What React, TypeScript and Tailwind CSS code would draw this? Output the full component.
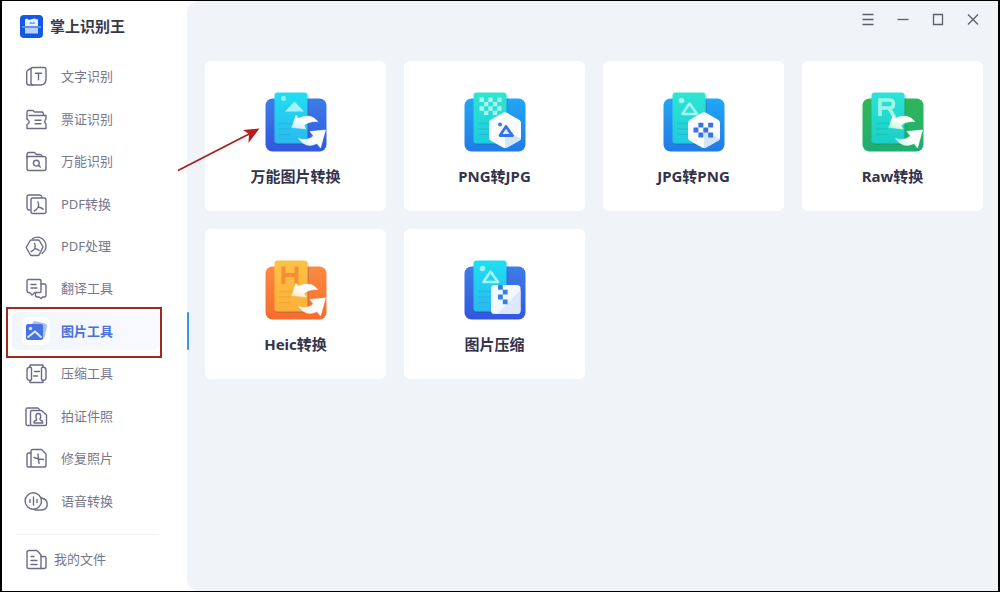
import React, { useState } from "react";
import clsx from "clsx";

const ADOBE = "M14 10q1 2.600.2 5-1.400 2.800-4 4M14.200 15q3 .3 5 2.200";

// Outline icons of the sidebar, one list of strokes per icon
const outlines: Record<string, string[]> = {
    text: [
        "M7 4.500L4 6Q2.700 6.700 2.700 8.200V18.500Q2.700 21 5 21H9",
        "M9 3.500H20Q22 3.500 22 5.500V15Q22 21 16 21H9Q7 21 7 19V5.500Q7 3.500 9 3.500Z",
        "M11.500 9.200h6M14.500 9.200v6.600",
    ],
    ticket: [
        "M3 12V5Q3 3.500 4.500 3.500H9L10.500 5H18Q19.500 5 19.500 8",
        "M5 8.500H22V12Q19.500 14.500 22 17V21.500H3V17.500Q7.500 15 3 12",
        "M11 13.200h6M11 16.800h6",
    ],
    search: [
        "M3 9V5.500Q3 3.500 5 3.500H10.500L12.500 5.500H16Q17.500 5.500 18 7.500",
        "M3 7.500H20Q22 7.500 22 9.500V19.500Q22 21.500 20 21.500H5Q3 21.500 3 19.500Z",
        "M15.200 14.200a2.900 2.900 0 1 1-5.800 0a2.900 2.900 0 0 1 5.800 0M14.500 16.300l1.800 1.700",
    ],
    pdf: [
        "M6 18H5Q3 17.500 3 15.500V5Q3 3 5 3H15.500Q17.500 3 18 5",
        "M9 6H20Q22 6 22 8V19.500Q22 21.500 20 21.500H9Q7 21.500 7 19.500V8Q7 6 9 6Z",
        ADOBE,
    ],
    pdfEdit: [
        "M8.500 4.500A8.700 8.700 0 1 1 18 19.500",
        "M7.500 6H14Q15 6 15.600 7L19 13L15.600 20Q15 21.500 14 21.500H7.500Q6.500 21.500 5.900 20L2.200 13.500L5.900 7Q6.500 6 7.500 6Z",
        "M10.700 9.500q1 2.600 0 5-1.200 2-3.500 3M10.700 14.500q2.500.2 4.500 2",
    ],
    translate: [
        "M4.500 3.500H15.500Q17 3.500 17 5V15.500Q17 16.500 16 16.500H11L8 19L5.500 16.500H4.500Q3 16.500 3 15V5Q3 3.500 4.500 3.500Z",
        "M17 8H20.500Q22 8 22 9.500V19.500Q22 21 20.500 21H18.500L17 22.500L15 21H13Q11.500 21 11.500 19V17",
        "M7 8.500h5M7 12h6",
    ],
    compress: [
        "M6 4H19V6Q17 6.500 17.500 8.500V17Q17 19 19 19.500V21.500H6V19.500Q8 19 7.500 17V8.500Q8 6.500 6 6Z",
        "M6 6Q3 6.500 3 9V17Q3 19 6 19.500M19 6Q22 6.500 22 9V17Q22 19 19 19.500",
        "M10.500 10.500h5M9.500 15h4",
    ],
    idPhoto: [
        "M6 21.500H3.500Q2 21.500 2 20V5.500Q2 4 3.500 4H13.500Q15 4 15.500 6",
        "M8 6.500H17.500L22.500 11V20Q22.500 21.500 21 21.500H8Q6.500 21.500 6.500 20V8Q6.500 6.500 8 6.500Z",
        "M10 19Q10 16.500 12.500 16Q13 15 12 13.500V12Q12 9.500 14.300 9.500T16.600 12V13.500Q15.600 15 16.200 16Q18.700 16.500 18.700 19Z",
    ],
    repair: [
        "M7 7H4.500Q3 7 3 8.500V19.500Q3 21 4.500 21H7",
        "M8.500 3.500H17.500L22 8V19.500Q22 21 20.500 21H8.500Q7 21 7 19.500V5Q7 3.500 8.500 3.500Z",
        "M14 8L14.500 13L19.500 13.500M10 11.500L14.500 13L15 17.500",
    ],
    voice: [
        "M17.500 12a8.200 8.200 0 1 1-16.400 0a8.200 8.200 0 0 1 16.400 0Z",
        "M17.500 9Q23.200 10 23.200 15.500Q23 21 17 21H11",
        "M9.500 8v8M6 10.500v3M13 10.500v3",
    ],
    files: [
        "M5 3.500H13L17 8V21.500H5Q3 21.500 3 19.500V5.500Q3 3.500 5 3.500Z",
        "M17 9.500H20.500Q22 9.500 22 11V19.500Q22 21.500 20 21.500H17",
        "M7 9.500h3M7 13.500h6M7 17.500h6",
    ],
};

function LineIcon({ name }: { name: string }) {
    return (
        <svg width="24" height="24" viewBox="0 0 24 24" fill="none" stroke="currentColor" strokeWidth="1.4" strokeLinejoin="round" strokeLinecap="round" className="shrink-0 text-[#6c6c8a]">
            {outlines[name].map((d) => (
                <path key={d} d={d} />
            ))}
        </svg>
    );
}

function PictureIcon() {
    return (
        <svg width="24" height="24" viewBox="0 0 24 24">
            <rect x="7" y="3" width="15" height="16" rx="3" fill="#a9bff5" transform="rotate(12 14 11)" />
            <rect x="2" y="5" width="17" height="16" rx="2" fill="#4672e4" />
            <circle cx="6.500" cy="9.500" r="1.700" fill="#dfe8ff" />
            <path d="M3.500 18.500L11 12.500L17.500 18.500" fill="none" stroke="#dfe8ff" strokeWidth="2" />
        </svg>
    );
}

function Logo() {
    return (
        <svg width="23" height="23" viewBox="0 0 23 23">
            <rect width="23" height="23" rx="4" fill="#1458e6" />
            <path d="M5 4.500L7 3.500L9 5L14 3.500L18 4.500V11H5Z" fill="#e9f1ff" />
            <path d="M9 9L11 6.500L12.500 8L14 6L15 9Z" fill="#7ba4f5" />
            <path d="M5 13H18V18.500H5Z" fill="#b9d0fc" />
            <path d="M2 12H21" stroke="#8cb4ff" strokeWidth="1.200" />
        </svg>
    );
}

type Palette = { body: [string, string]; sheet: [string, string]; line: string };

const palettes: Record<string, Palette> = {
    blue: { body: ["#3d7de6", "#3257df"], sheet: ["#1fdff2", "#2bb9ee"], line: "#22a6dd" },
    sky: { body: ["#22a7f5", "#207be8"], sheet: ["#2fe6cf", "#1fcbe0"], line: "#1fb4c6" },
    green: { body: ["#30b658", "#1fae72"], sheet: ["#2be3d8", "#1bcfc6"], line: "#1db6a5" },
    orange: { body: ["#fb8a42", "#f66c2c"], sheet: ["#fcc244", "#fbb03a"], line: "#ee9a2c" },
};

// Pair of curved arrows on the corner of the converter icons
function SwapArrows({ id, tint }: { id: string; tint: string }) {
    return (
        <g fill={`url(#${id}-white)`} stroke={`url(#${id}-white)`} strokeWidth=".6" strokeLinejoin="round">
            <defs>
                <linearGradient id={`${id}-white`} x1="1" y1="0" x2="0" y2="1">
                    <stop stopColor="#ffffff" offset=".5" />
                    <stop stopColor={tint} offset="1" />
                </linearGradient>
            </defs>
            <path d="M27.800 37.500L32 25.500L34.500 28.500Q46 22.500 53.800 31.500Q44.500 31 40 35.500L42 39Z" />
            <path d="M46 41.500L61.500 40L56.500 58L53 53.500Q42 59 34.500 48.500Q43 51.500 49.500 46Z" />
        </g>
    );
}

function Hexagon({ children }: { children: React.ReactNode }) {
    return (
        <g>
            <path d="M40 22.800Q42 21.600 44 22.800L56.500 30Q58 31 58 33V47.500Q58 49.500 56.500 50.400L44 57.500Q42 58.700 40 57.500L27.500 50.400Q26 49.500 26 47.500V33Q26 31 27.500 30Z" fill="#fafcff" />
            <path d="M42 58.200V40L58 49Q57.500 50 56.500 50.400L44 57.500Q43 58.200 42 58.200Z" fill="#d3e5fb" />
            {children}
        </g>
    );
}

function Checker({ x, y, size, cells, color }: { x: number; y: number; size: number; cells: number[][]; color: string }) {
    return (
        <g fill={color}>
            {cells.map(([cx, cy]) => (
                <rect key={`${cx}-${cy}`} x={x + cx * size} y={y + cy * size} width={size} height={size} rx=".5" />
            ))}
        </g>
    );
}

function ToolIcon({ id, palette }: { id: string; palette: string }) {
    const p = palettes[palette];
    const outlined = id === "toPng" || id === "shrink";
    return (
        <svg width="64" height="64" viewBox="0 0 64 64" aria-hidden="true">
            <defs>
                <linearGradient id={`${id}-body`} x1="0" y1="0" x2="0" y2="1">
                    <stop stopColor={p.body[0]} />
                    <stop stopColor={p.body[1]} offset="1" />
                </linearGradient>
                <linearGradient id={`${id}-sheet`} x1="0" y1="0" x2="0" y2="1">
                    <stop stopColor={p.sheet[0]} />
                    <stop stopColor={p.sheet[1]} offset="1" />
                </linearGradient>
            </defs>
            <rect x="1.500" y="8.500" width="61" height="53" rx="7" fill={`url(#${id}-body)`} />
            <rect x="11.500" y="4" width="33.500" height="51" rx="3" fill="#10407a" opacity=".14" />
            <rect x="10.500" y="2.500" width="33" height="51" rx="3" fill={`url(#${id}-sheet)`} />
            <path d="M15 33.500H29M15 39H27M15 44.500H27" stroke={p.line} strokeWidth="1.500" opacity=".45" />
            {id === "any" && (
                <>
                    <circle cx="19.500" cy="8.500" r="2.500" fill="#8beff9" />
                    <path d="M16 21.500L21 15L26 21.500Z" fill="#30c9e8" />
                    <path d="M21 21.500L30.500 11.500L40 21.500Z" fill="#a3f3fb" />
                </>
            )}
            {outlined && (
                <>
                    <circle cx="19.500" cy="10.500" r="2.800" fill="#9cf6ee" />
                    <path d="M20.500 24L27.500 13.500L35 24Z" fill="none" stroke="#a5f5f0" strokeWidth="2.500" strokeLinejoin="round" />
                </>
            )}
            {id === "toJpg" && (
                <Checker x={16.5} y={7.5} size={4.4} color="#a6f8ec" cells={[[0, 0], [2, 0], [4, 0], [1, 1], [3, 1], [0, 2], [2, 2], [4, 2], [1, 3], [3, 3]]} />
            )}
            {id === "raw" && (
                <path d="M19 26V10H28.500Q32.500 10 32.500 14Q32.500 18 28.500 18H19M28 18L34 28" fill="none" stroke="#a0f5e5" strokeWidth="3.600" />
            )}
            {id === "heic" && <path d="M19.500 8.500V26M32.500 8.500V26M19.500 17H32.500" fill="none" stroke="#f88e35" strokeWidth="4" />}
            {(id === "any" || id === "raw" || id === "heic") && (
                <SwapArrows id={id} tint={id === "any" ? "#c4e8ff" : id === "raw" ? "#b5f5c8" : "#ffe3bd"} />
            )}
            {id === "toJpg" && (
                <Hexagon>
                    <circle cx="37" cy="34.500" r="2" fill="#3b7be8" />
                    <path d="M37 45.500L43 36.500L49.500 45.500Z" fill="none" stroke="#3574e4" strokeWidth="2.800" strokeLinejoin="round" />
                </Hexagon>
            )}
            {id === "toPng" && (
                <Hexagon>
                    <Checker x={31.500} y={32.700} size={4.900} color="#3574e4" cells={[[1, 0], [3, 0], [0, 1], [2, 1], [1, 2], [3, 2]]} />
                </Hexagon>
            )}
            {id === "shrink" && (
                <>
                    <rect x="28" y="27" width="29.500" height="29" rx="3.500" fill="#f3f8ff" />
                    <path d="M57.500 32V52.500Q57.500 56 54 56H34Z" fill="#dce9fd" />
                    <Checker x={35} y={27} size={4.800} color="#3380ea" cells={[[0, 0], [1, 1], [0, 2], [1, 3]]} />
                </>
            )}
        </svg>
    );
}

const menu = [
    { icon: "text", label: "文字识别" },
    { icon: "ticket", label: "票证识别" },
    { icon: "search", label: "万能识别" },
    { icon: "pdf", label: "PDF转换" },
    { icon: "pdfEdit", label: "PDF处理" },
    { icon: "translate", label: "翻译工具" },
    { icon: "picture", label: "图片工具" },
    { icon: "compress", label: "压缩工具" },
    { icon: "idPhoto", label: "拍证件照" },
    { icon: "repair", label: "修复照片" },
    { icon: "voice", label: "语音转换" },
];

const tools = [
    { id: "any", label: "万能图片转换", palette: "blue" },
    { id: "toJpg", label: "PNG转JPG", palette: "sky" },
    { id: "toPng", label: "JPG转PNG", palette: "sky" },
    { id: "raw", label: "Raw转换", palette: "green" },
    { id: "heic", label: "Heic转换", palette: "orange" },
    { id: "shrink", label: "图片压缩", palette: "blue" },
];

const windowButtons = [
    { label: "菜单", d: "M2.500 3.500H13.500M2.500 8.500H13.500M2.500 13.500H13.500" },
    { label: "最小化", d: "M2.500 8.500H13.500" },
    { label: "最大化", d: "M3.500 3.500H12.500V13.500H3.500Z" },
    { label: "关闭", d: "M3 3.500L13 13.500M13 3.500L3 13.500" },
];

function MenuItem({ icon, label, active, onClick }: { icon: string; label: string; active: boolean; onClick: () => void }) {
    return (
        <button
            type="button"
            onClick={onClick}
            className={clsx("relative flex min-h-10 flex-1 items-center pl-5 text-[13px] leading-5", active ? "font-bold text-[#4a70dc]" : "text-[#77778b]")}
        >
            {active && (
                <>
                    <span className="absolute left-2.5 right-7 h-[38px] rounded-md bg-linear-to-r from-[#f1f5fd] to-[#f8faff]" />
                    <span className="absolute -right-0.5 h-[38px] w-0.5 rounded-full bg-[#3d96ea]" />
                    <span className="absolute -top-[3px] left-1 h-[51px] w-[156px] border-2 border-[#a3291f]" />
                </>
            )}
            <span className={clsx("relative flex size-7 shrink-0 items-center justify-center rounded-md", active && "bg-white")}>
                {icon === "picture" ? <PictureIcon /> : <LineIcon name={icon} />}
            </span>
            <span className="relative ml-[11px]">{label}</span>
        </button>
    );
}

export default function App() {
    const [current, setCurrent] = useState("图片工具");

    return (
        <div className="flex min-h-screen border-x-2 border-y border-black bg-white font-['Noto_Sans','Noto_Sans_CJK_SC',sans-serif]">
            <aside className="relative z-10 flex w-[185px] shrink-0 flex-col">
                <div className="mb-1 flex h-[50px] items-center gap-[7px] pl-[18px]">
                    <Logo />
                    <h1 className="text-[15px] font-bold leading-6 text-[#37374d]">掌上识别王</h1>
                </div>
                <nav className="flex flex-1 flex-col">
                    {menu.map((m) => (
                        <MenuItem key={m.label} icon={m.icon} label={m.label} active={m.label === current} onClick={() => setCurrent(m.label)} />
                    ))}
                </nav>
                <hr className="ml-3.5 mr-7 mt-3 border-[#f0f0f3]" />
                <button type="button" className="mb-2 flex h-12 items-center gap-1.5 pl-[22px] text-[13px] leading-5 text-[#77778b]">
                    <LineIcon name="files" />
                    我的文件
                </button>
            </aside>

            <main className="min-w-0 flex-1 rounded-l-xl bg-[#f0f4f8]">
                <header className="flex h-[60px] items-start justify-end pr-2">
                    {windowButtons.map((b) => (
                        <button key={b.label} type="button" aria-label={b.label} className="flex h-9 w-[35px] items-center justify-center text-[#5c5f66]">
                            <svg width="16" height="16" viewBox="0 0 16 16" fill="none" stroke="currentColor" strokeWidth="1.300">
                                <path d={b.d} />
                            </svg>
                        </button>
                    ))}
                </header>

                <div className="grid grid-cols-4 gap-[18px] pb-4 pl-[18px] pr-[15px]">
                    {tools.map((t) => (
                        <button key={t.id} type="button" className="relative flex flex-col items-center rounded-md bg-white pb-[23px] pt-[29px]">
                            <ToolIcon id={t.id} palette={t.palette} />
                            <span className="mt-2.5 text-[15px] font-bold leading-6 text-[#33334b]">{t.label}</span>
                            {t.id === "any" && (
                                <svg width="84" height="46" viewBox="0 0 84 46" className="absolute -left-7 top-[66px]" aria-hidden="true">
                                    <path d="M1 43.500L74 6" stroke="#a8201b" strokeWidth="1.800" />
                                    <path d="M82.500 1.500L66 3L72 7L71.500 16Z" fill="#b91c1c" />
                                </svg>
                            )}
                        </button>
                    ))}
                </div>
            </main>
        </div>
    );
}
